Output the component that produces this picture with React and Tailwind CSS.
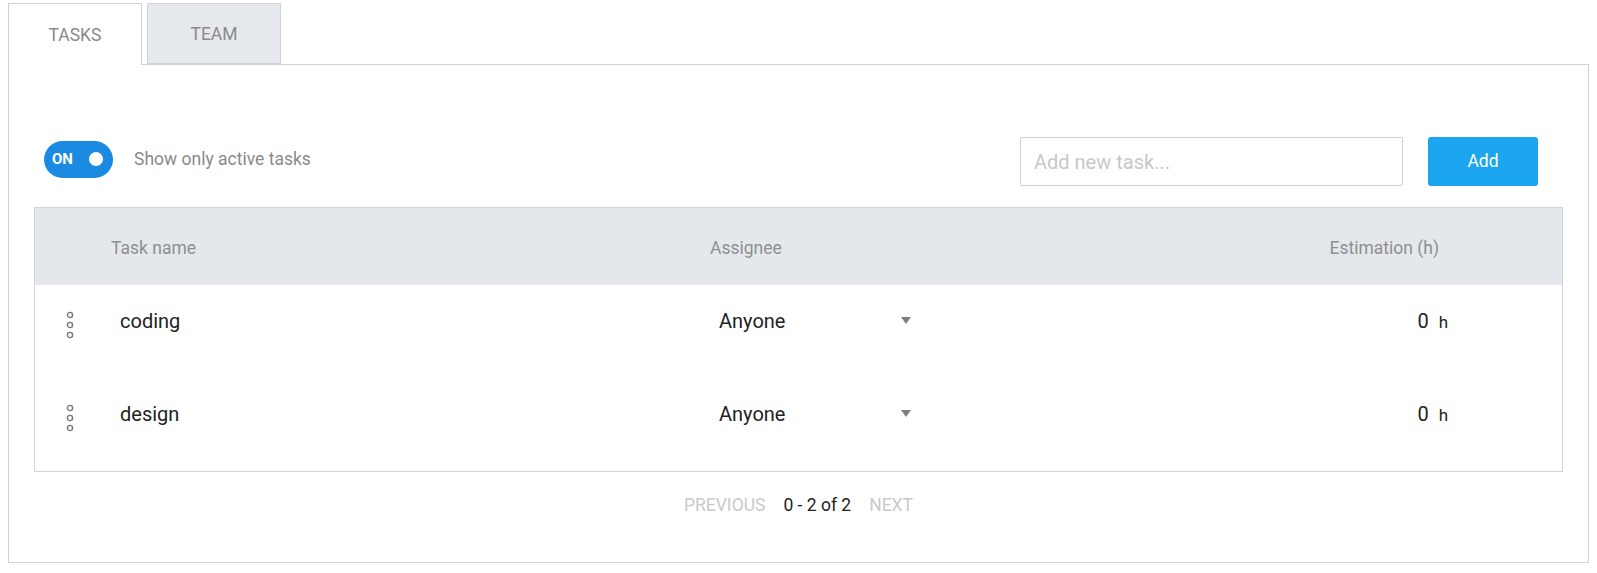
import React, { useState } from 'react';

const tasks = [
  { name: 'coding', assignee: 'Anyone', hours: 0 },
  { name: 'design', assignee: 'Anyone', hours: 0 },
];

const Dots = () => (
  <svg width="8" height="28" viewBox="0 0 8 28" className="block">
    <circle cx="4" cy="4" r="2.6" fill="none" stroke="#777" strokeWidth="1.4" />
    <circle cx="4" cy="14" r="2.6" fill="none" stroke="#777" strokeWidth="1.4" />
    <circle cx="4" cy="24" r="2.6" fill="none" stroke="#777" strokeWidth="1.4" />
  </svg>
);

const Toggle = ({ on, onClick }) => (
  <button
    onClick={onClick}
    className="flex items-center justify-between w-[69px] h-[37px] rounded-full bg-[#1b8be2] pl-[8px] pr-[10px]"
  >
    <span className="text-white text-[15px] font-bold leading-none">{on ? 'ON' : 'OFF'}</span>
    <span className="w-[14px] h-[14px] rounded-full bg-white" />
  </button>
);

const App = () => {
  const [activeOnly, setActiveOnly] = useState(true);

  return (
    <div className="w-[1597px] h-[573px] bg-white pl-[8px] pt-[3px] font-['Roboto',sans-serif]">
      {/* tabs */}
      <div className="flex gap-[5px] h-[61px]">
        <div className="w-[134px] h-[62px] border border-b-0 border-[#cfd3d7] bg-white flex items-center justify-center text-[17.5px] text-[#8a8a8a] relative z-10 pt-[1px]">
          TASKS
        </div>
        <div className="w-[134px] h-[61px] border border-[#cfd3d7] bg-[#e5e9ee] flex items-center justify-center text-[17.5px] text-[#8a8a8a] pt-[1px]">
          TEAM
        </div>
      </div>

      {/* panel */}
      <div className="w-[1581px] h-[499px] border border-[#cfd3d7] px-[25px] pt-[72px]">
        <div className="flex items-center justify-between pl-[10px] pr-[25px]">
          <div className="flex items-center gap-[21px] -mt-[5px]">
            <Toggle on={activeOnly} onClick={() => setActiveOnly(!activeOnly)} />
            <span className="text-[17.5px] text-[#8a8a8a]">Show only active tasks</span>
          </div>
          <div className="flex items-center gap-[25px]">
            <input
              placeholder="Add new task..."
              className="w-[383px] h-[49px] border border-[#cfcfcf] rounded-[2px] px-[13px] text-[20px] text-[#333] placeholder:text-[#c8c8c8] outline-none"
            />
            <button className="w-[110px] h-[49px] rounded-[3px] bg-[#1ba6ef] text-white text-[17.5px]">
              Add
            </button>
          </div>
        </div>

        {/* table */}
        <div className="mt-[21px] border border-[#d2d6da]">
          <div className="flex items-center h-[77px] bg-[#e4e8ec] pl-[76px] pr-[123px] text-[17.5px] text-[#8f8f8f] pt-[4px]">
            <div className="w-[599px]">Task name</div>
            <div className="flex-1">Assignee</div>
            <div>Estimation (h)</div>
          </div>
          {tasks.map((t) => (
            <div key={t.name} className="flex items-start h-[93px] pt-[21px] pr-[114px] text-[20px] text-[#222]">
              <div className="w-[85px] pl-[31px] pt-[5px]">
                <Dots />
              </div>
              <div className="w-[599px]">{t.name}</div>
              <div className="w-[182px]">{t.assignee}</div>
              <div className="pt-[11px]">
                <svg width="10" height="7" viewBox="0 0 10 7" className="block">
                  <path d="M0 0 L10 0 L5 7 Z" fill="#808080" />
                </svg>
              </div>
              <div className="flex-1 flex justify-end items-baseline">
                <span>{t.hours}</span>
                <span className="ml-[10px] text-[17px]">h</span>
              </div>
            </div>
          ))}
        </div>

        {/* pagination */}
        <div className="flex items-center justify-center gap-[18px] mt-[20px] text-[17.5px]">
          <span className="text-[#cacaca]">PREVIOUS</span>
          <span className="text-[#222]">0 - 2 of 2</span>
          <span className="text-[#cacaca]">NEXT</span>
        </div>
      </div>
    </div>
  );
};

export default App;
